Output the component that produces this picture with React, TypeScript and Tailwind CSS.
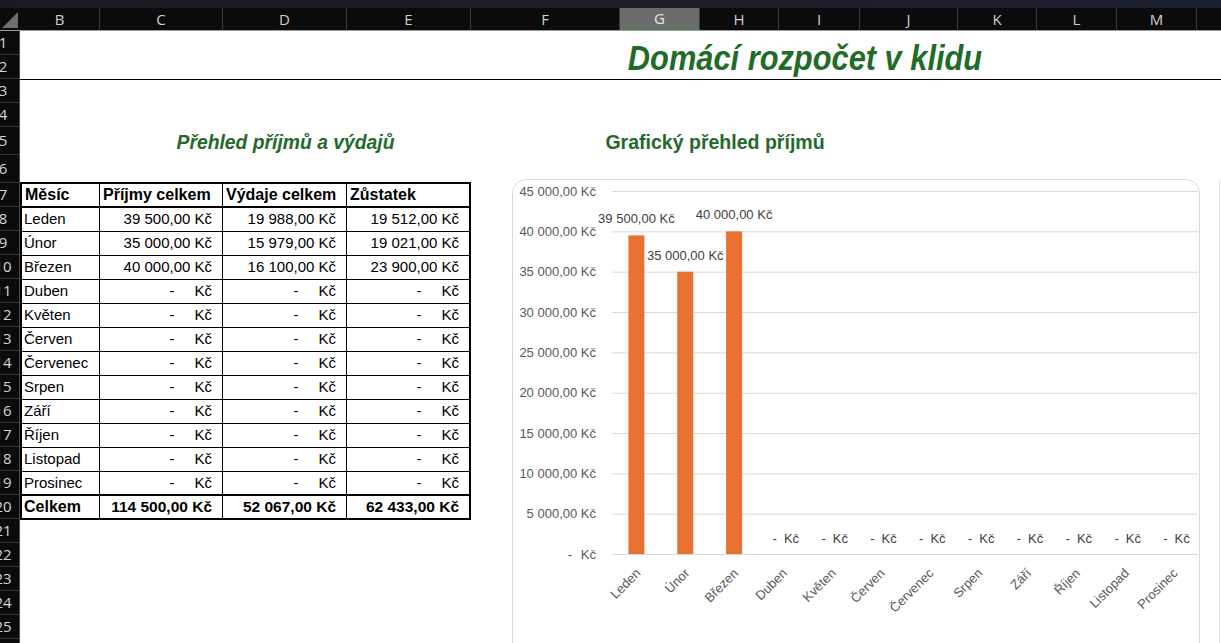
import React from "react";

const colHeads = [
  { l: "B", w: "w-[80px]" },
  { l: "C", w: "w-[123px]" },
  { l: "D", w: "w-[124px]" },
  { l: "E", w: "w-[124px]" },
  { l: "F", w: "w-[149px]" },
  { l: "G", w: "w-[80px]" },
  { l: "H", w: "w-[79px]" },
  { l: "I", w: "w-[81px]" },
  { l: "J", w: "w-[98px]" },
  { l: "K", w: "w-[79px]" },
  { l: "L", w: "w-[80px]" },
  { l: "M", w: "w-[80px]" },
];

const months = [
  "Leden",
  "Únor",
  "Březen",
  "Duben",
  "Květen",
  "Červen",
  "Červenec",
  "Srpen",
  "Září",
  "Říjen",
  "Listopad",
  "Prosinec",
];

const income = [39500, 35000, 40000, 0, 0, 0, 0, 0, 0, 0, 0, 0];
const expense = [19988, 15979, 16100, 0, 0, 0, 0, 0, 0, 0, 0, 0];

function fmt(v: number) {
  const s = Math.round(v).toString().replace(/\B(?=(\d{3})+(?!\d))/g, " ");
  return `${s},00 Kč`;
}

function Money({ v, bold }: { v: number; bold?: boolean }) {
  if (v === 0) {
    return (
      <div className="flex h-full items-center justify-end pr-[10px]">
        <span>-</span>
        <span className="ml-[20px]">Kč</span>
      </div>
    );
  }
  return (
    <div
      className={
        "flex h-full items-center justify-end pr-[10px] " + (bold ? "text-[15.5px] font-bold" : "")
      }
    >
      {fmt(v)}
    </div>
  );
}

function RowHeaders() {
  const rows = Array.from({ length: 26 }, (_, i) => i + 1);
  return (
    <div className="w-[20px] shrink-0 overflow-hidden border-r border-[#4a4a4a] bg-[#0b0b0b]">
      {rows.map((n) => (
        <div
          key={n}
          className={
            "flex items-center overflow-hidden border-b border-[#333] font-['Open_Sans',sans-serif] text-[15px] text-[#d4d4d4] " +
            (n === 5 || n === 6 ? "h-[28px]" : "h-[24px]")
          }
        >
          <div className="-ml-[7px] w-[20px] shrink-0 text-center">{n}</div>
        </div>
      ))}
    </div>
  );
}

function ColumnHeaders() {
  return (
    <div className="flex h-[23px] border-b border-[#9a9a9a] bg-[#0b0b0b] font-['Open_Sans',sans-serif] text-[15px] text-[#d0d0d0]">
      <div className="flex w-[20px] shrink-0 items-end justify-end pb-[2px] pr-[2px]">
        <svg width="16" height="16" viewBox="0 0 16 16">
          <polygon points="16,0 16,16 0,16" fill="#6e6e6e" />
        </svg>
      </div>
      {colHeads.map((c) => (
        <div
          key={c.l}
          className={
            c.w +
            " flex shrink-0 items-center justify-center border-r border-[#3c3c3c] " +
            (c.l === "G" ? "border-b-2 border-b-[#4f7d5c] bg-[#6b6b6b] text-[#eaeaea]" : "")
          }
        >
          {c.l}
        </div>
      ))}
      <div className="flex-1" />
    </div>
  );
}

function BudgetTable() {
  const cell = "h-[24px] border-r border-b border-black";
  const head = " flex items-center border-b-2 pl-[3px] text-[16px] font-bold";
  return (
    <div className="mt-[3px] grid w-[451px] shrink-0 grid-cols-[78px_123px_124px_124px] border-l-2 border-t-2 border-black font-['Liberation_Sans',sans-serif] text-[15px] text-black">
      <div className={cell + head + " pl-[2px]"}>Měsíc</div>
      <div className={cell + head}>Příjmy celkem</div>
      <div className={cell + head}>Výdaje celkem</div>
      <div className={cell + head + " border-r-2"}>Zůstatek</div>
      {months.map((m, i) => {
        const last = i === months.length - 1;
        const b = last ? " border-b-2" : "";
        return (
          <React.Fragment key={m}>
            <div className={cell + b + " flex items-center pl-[2px]"}>{m}</div>
            <div className={cell + b}>
              <Money v={income[i]} />
            </div>
            <div className={cell + b}>
              <Money v={expense[i]} />
            </div>
            <div className={cell + b + " border-r-2"}>
              <Money v={income[i] - expense[i]} />
            </div>
          </React.Fragment>
        );
      })}
      <div className={cell + " flex items-center border-b-2 pl-[2px] text-[16px] font-bold"}>Celkem</div>
      <div className={cell + " border-b-2"}>
        <Money v={114500} bold />
      </div>
      <div className={cell + " border-b-2"}>
        <Money v={52067} bold />
      </div>
      <div className={cell + " border-b-2 border-r-2"}>
        <Money v={62433} bold />
      </div>
    </div>
  );
}

function IncomeChart() {
  const X0 = 99;
  const X1 = 685;
  const Y0 = 374;
  const step = 40.33;
  const cw = (X1 - X0) / 12;
  const y = (v: number) => Y0 - (v / 5000) * step;
  const ticks = Array.from({ length: 10 }, (_, i) => i * 5000);

  return (
    <svg width="687" height="464" className="block font-['Liberation_Sans',sans-serif]">
      {ticks.map((t) => (
        <g key={t}>
          <line x1={X0} x2={X1} y1={y(t) + 0.5} y2={y(t) + 0.5} stroke="#d9d9d9" strokeWidth="1" />
          {t === 0 ? (
            <>
              <text x={59} y={y(t) + 4.5} textAnchor="end" fontSize="13" fill="#595959">
                -
              </text>
              <text x={83} y={y(t) + 4.5} textAnchor="end" fontSize="13" fill="#595959">
                Kč
              </text>
            </>
          ) : (
            <text x={83} y={y(t) + 4.5} textAnchor="end" fontSize="13" fill="#595959">
              {fmt(t)}
            </text>
          )}
        </g>
      ))}
      {months.map((m, i) => {
        const cx = X0 + cw * (i + 0.5);
        const v = income[i];
        return (
          <g key={m}>
            {v > 0 ? (
              <>
                <rect x={cx - 8} y={y(v)} width="16" height={Y0 - y(v)} fill="#e97132" />
                <text x={cx} y={y(v) - 12} textAnchor="middle" fontSize="13" fill="#404040">
                  {fmt(v)}
                </text>
              </>
            ) : (
              <>
                <text x={cx - 6} y={Y0 - 11} textAnchor="end" fontSize="13" fill="#404040">
                  -
                </text>
                <text x={cx + 1} y={Y0 - 11} textAnchor="start" fontSize="13" fill="#404040">
                  Kč
                </text>
              </>
            )}
            <text
              x={cx + 5}
              y={Y0 + 20}
              textAnchor="end"
              fontSize="13"
              fill="#595959"
              transform={`rotate(-45 ${cx + 5} ${Y0 + 20})`}
            >
              {m}
            </text>
          </g>
        );
      })}
    </svg>
  );
}

export default function App() {
  return (
    <div className="h-[643px] w-[1221px] overflow-hidden bg-white">
      <div className="h-[8px] bg-gradient-to-r from-[#1c1a20] to-[#1d2030]" />
      <ColumnHeaders />
      <div className="flex">
        <RowHeaders />
        <div className="min-w-0 flex-1">
          <div className="flex h-[49px] items-center border-b border-black pt-[4px]">
            <div className="ml-[420px] w-[730px] scale-x-[0.88] text-center font-['Liberation_Sans',sans-serif] text-[35px] font-bold italic leading-none text-[#1f6b28]">
              Domácí rozpočet v klidu
            </div>
          </div>
          <div className="h-[47px]" />
          <div className="flex h-[28px] items-center pt-[2px] font-['Liberation_Sans',sans-serif] text-[21px] font-bold text-[#24692c]">
            <div className="ml-[80px] w-[371px] scale-x-[0.92] text-center italic">Přehled příjmů a výdajů</div>
            <div className="ml-[41px] w-[406px] scale-x-[0.93] text-center">Grafický přehled příjmů</div>
          </div>
          <div className="h-[24px]" />
          <div className="flex items-start">
            <BudgetTable />
            <div className="ml-[41px] h-[480px] w-[688px] shrink-0 rounded-t-[14px] border border-[#d9d9d9] bg-white">
              <IncomeChart />
            </div>
            <div className="ml-[19px] h-[480px] border-l border-[#e3e3e3]" />
          </div>
        </div>
      </div>
    </div>
  );
}
